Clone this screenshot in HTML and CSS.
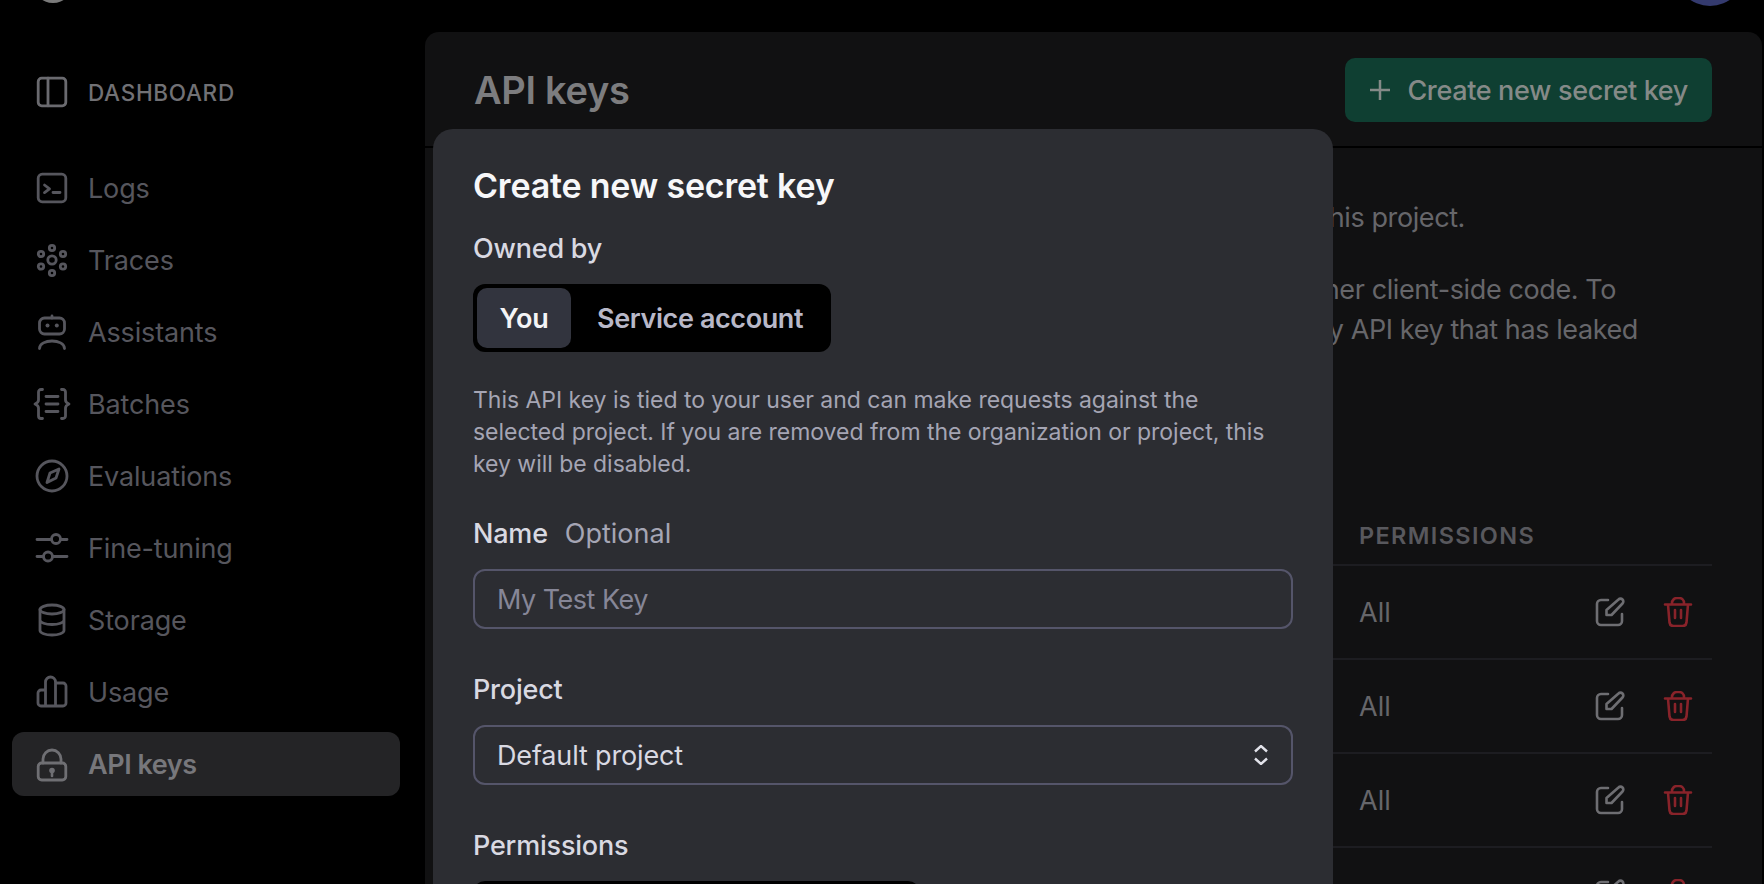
FILE: index.html
```html
<!DOCTYPE html>
<html lang="en">
<head>
<meta charset="utf-8">
<title>API keys</title>
<link rel="stylesheet" href="styles.css">
</head>
<body>
<div class="page">
  <aside class="sidebar">
    <div class="topmark"><span class="org-dot"></span></div>
    <div class="dash">
      <svg class="ico" viewBox="0 0 30 30"><rect x="1.2" y="1.2" width="27.6" height="27.6" rx="3.5"/><path d="M11 1.2V28.8"/></svg>
      <span>DASHBOARD</span>
    </div>
    <nav class="nav">
      <a class="item"><svg class="ico" viewBox="0 0 30 30"><rect x="1.2" y="1.2" width="27.6" height="27.6" rx="4"/><path d="M7.5 12l5 3.8-5 3.8M16 19.5h7"/></svg>Logs</a>
      <a class="item"><svg class="ico" viewBox="0 0 30 30"><circle cx="15" cy="15" r="4.2"/><circle cx="15" cy="3" r="2.7"/><circle cx="15" cy="28" r="2.7"/><circle cx="4" cy="9" r="2.7"/><circle cx="26" cy="9" r="2.7"/><circle cx="4" cy="21.5" r="2.7"/><circle cx="26" cy="21.5" r="2.7"/></svg>Traces</a>
      <a class="item"><svg class="ico" viewBox="0 0 30 30"><rect x="2.5" y="1" width="25" height="16" rx="5"/><path d="M15 1V-1M2.5 31.5c0-10 25-10 25 0"/><circle class="fill" cx="10.5" cy="8.5" r="2"/><circle class="fill" cx="19.8" cy="8.5" r="2"/></svg>Assistants</a>
      <a class="item"><svg class="ico" viewBox="0 0 30 30"><path d="M5.5.5H4a2.5 2.5 0 0 0-2.500 2.500v8c0 2-1 3-3.500 4 2.500 1 3.500 2 3.500 4v8a2.500 2.500 0 0 0 2.500 2.500h1.500M24.500.5H26a2.500 2.500 0 0 1 2.500 2.500v8c0 2 1 3 3.500 4-2.500 1-3.500 2-3.500 4v8a2.500 2.500 0 0 1-2.500 2.500h-1.500M9 7.500h12M9 15h12M9 22.500h12"/></svg>Batches</a>
      <a class="item"><svg class="ico" viewBox="0 0 30 30"><circle cx="15" cy="15" r="15"/><path d="M22 8l-3 9-9 4.500 3-9.500z"/></svg>Evaluations</a>
      <a class="item"><svg class="ico" viewBox="0 0 30 30"><path d="M0 6.500h14.500M24 6.500h6M0 23.500h6M15.500 23.500H30"/><circle cx="19" cy="6" r="4.500"/><circle cx="11" cy="23.500" r="4.500"/></svg>Fine-tuning</a>
      <a class="item"><svg class="ico" viewBox="0 0 30 30"><ellipse cx="15" cy="4.500" rx="12" ry="4.500"/><path d="M3 4.500v21c0 2.500 5.500 4.500 12 4.500s12-2 12-4.500v-21M3 15c0 2.500 5.500 4.500 12 4.500S27 17.500 27 15"/></svg>Storage</a>
      <a class="item"><svg class="ico" viewBox="0 0 30 30"><path d="M8.500 13H4a3 3 0 0 0-3 3v10a3 3 0 0 0 3 3h22a3 3 0 0 0 3-3V9a3 3 0 0 0-3-3h-7.500M8.500 29V5a5 5 0 0 1 10 0V29"/></svg>Usage</a>
      <a class="item active"><svg class="ico" viewBox="0 0 30 30"><rect x="1.200" y="14" width="27.600" height="17" rx="3.500"/><path d="M6 14v-4a9 9 0 0 1 18 0v4"/><circle class="fill" cx="15" cy="21.500" r="2.800"/><path class="thin" d="M15 22v5"/></svg>API keys</a>
    </nav>
  </aside>

  <div class="right">
    <div class="topbar"><span class="avatar"></span></div>
    <main class="panel">
      <header class="panel-head">
        <h1>API keys</h1>
        <button class="create"><svg class="plus" viewBox="0 0 22 22"><path d="M11 1V21M1 11H21"/></svg>Create new secret key</button>
      </header>
      <section class="intro">
        <p class="line-a">this project.</p>
        <p class="line-b">other client-side code. To</p>
        <p class="line-c">any API key that has leaked</p>
      </section>
      <section class="table">
        <div class="thead">PERMISSIONS</div>
        <div class="row"><span>All</span><span class="acts"><svg class="edit" viewBox="0 0 30 30"><path d="M13 3H6a4 4 0 0 0-4 4v17a4 4 0 0 0 4 4h17a4 4 0 0 0 4-4v-7"/><path d="M23.500 2.500a2.700 2.700 0 0 1 4 4L16.500 18H11.500v-5z"/></svg><svg class="trash" viewBox="0 0 30 30"><path d="M2 7.500h26M9 7.500V6a5 5 0 0 1 5-5h2a5 5 0 0 1 5 5v1.500M5 7.500l1.500 18a4 4 0 0 0 4 3.500h9a4 4 0 0 0 4-3.500L25 7.500M12 13v8M18 13v8"/></svg></span></div>
        <div class="row"><span>All</span><span class="acts"><svg class="edit" viewBox="0 0 30 30"><path d="M13 3H6a4 4 0 0 0-4 4v17a4 4 0 0 0 4 4h17a4 4 0 0 0 4-4v-7"/><path d="M23.500 2.500a2.700 2.700 0 0 1 4 4L16.500 18H11.500v-5z"/></svg><svg class="trash" viewBox="0 0 30 30"><path d="M2 7.500h26M9 7.500V6a5 5 0 0 1 5-5h2a5 5 0 0 1 5 5v1.500M5 7.500l1.500 18a4 4 0 0 0 4 3.500h9a4 4 0 0 0 4-3.500L25 7.500M12 13v8M18 13v8"/></svg></span></div>
        <div class="row"><span>All</span><span class="acts"><svg class="edit" viewBox="0 0 30 30"><path d="M13 3H6a4 4 0 0 0-4 4v17a4 4 0 0 0 4 4h17a4 4 0 0 0 4-4v-7"/><path d="M23.500 2.500a2.700 2.700 0 0 1 4 4L16.500 18H11.500v-5z"/></svg><svg class="trash" viewBox="0 0 30 30"><path d="M2 7.500h26M9 7.500V6a5 5 0 0 1 5-5h2a5 5 0 0 1 5 5v1.500M5 7.500l1.500 18a4 4 0 0 0 4 3.500h9a4 4 0 0 0 4-3.500L25 7.500M12 13v8M18 13v8"/></svg></span></div>
        <div class="row"><span></span><span class="acts"><svg class="edit" viewBox="0 0 30 30"><path d="M13 3H6a4 4 0 0 0-4 4v17a4 4 0 0 0 4 4h17a4 4 0 0 0 4-4v-7"/><path d="M23.500 2.500a2.700 2.700 0 0 1 4 4L16.500 18H11.500v-5z"/></svg><svg class="trash" viewBox="0 0 30 30"><path d="M2 7.500h26M9 7.500V6a5 5 0 0 1 5-5h2a5 5 0 0 1 5 5v1.500M5 7.500l1.500 18a4 4 0 0 0 4 3.500h9a4 4 0 0 0 4-3.500L25 7.500M12 13v8M18 13v8"/></svg></span></div>
      </section>
    </main>
  </div>

  <div class="modal" role="dialog">
    <h2>Create new secret key</h2>
    <div class="label owned">Owned by</div>
    <div class="seg">
      <span class="seg-on">You</span>
      <span class="seg-off">Service account</span>
    </div>
    <p class="help">This API key is tied to your user and can make requests against the<br>selected project. If you are removed from the organization or project, this<br>key will be disabled.</p>
    <div class="label name">Name <span class="opt">Optional</span></div>
    <div class="field ph">My Test Key</div>
    <div class="label proj">Project</div>
    <div class="field val">Default project
      <svg class="chev" viewBox="0 0 14 20"><path d="M1 6.500L7 1l6 5.500M1 13.500L7 19l6-5.500"/></svg>
    </div>
    <div class="label perm">Permissions</div>
    <div class="seg seg-perm"></div>
  </div>
</div>
</body>
</html>
```

FILE: styles.css
```css
* { box-sizing: border-box; }
html, body { margin: 0; padding: 0; background: #000; }
body { font-family: Inter, "Liberation Sans", sans-serif; }
.page { position: relative; display: flex; width: 1764px; height: 884px; overflow: hidden; background: #000; }

.sidebar { width: 425px; flex: none; padding-right: 25px; }
.topmark { display: flex; height: 32px; padding-left: 33px; }
.org-dot { display: block; flex: none; width: 40px; height: 40px; margin-top: -37px; border-radius: 50%; background: #7a7a7a; }
.dash { display: flex; align-items: center; height: 60px; margin-top: 30px; padding-left: 37px; gap: 21px; font-size: 22.500px; font-weight: 500; letter-spacing: 0.700px; color: #717175; }
.ico { width: 30px; height: 30px; flex: none; overflow: visible; fill: none; stroke: #56565d; stroke-width: 2.800; stroke-linecap: round; stroke-linejoin: round; }
.ico .fill { fill: #56565d; stroke: none; }
.dash .ico { stroke: #6a6a6f; }
.nav { display: flex; flex-direction: column; gap: 8px; margin: 34px 0 0 12px; }
.item { display: flex; align-items: center; height: 64px; padding-left: 25px; gap: 21px; border-radius: 12px; font-size: 27px; letter-spacing: -0.150px; color: #56565d; }
.item.active { background: #242426; color: #77777b; font-weight: 600; letter-spacing: -0.450px; }
.item.active .ico { stroke: #6f6f73; }
.item.active .ico .fill { fill: #6f6f73; stroke: none; }
.item.active .ico .thin { stroke-width: 2.600; }

.right { flex: 1; display: flex; flex-direction: column; padding-right: 2px; min-width: 0; }
.topbar { height: 32px; flex: none; padding-left: 1247px; }
.avatar { display: block; width: 70px; height: 70px; margin-top: -64px; margin-left: 3px; border-radius: 50%; background: #343a6e; }

.panel { flex: 1; background: #111112; border-radius: 14px 14px 0 0; }
.panel-head { display: flex; align-items: center; justify-content: space-between; height: 116px; padding: 2px 50px 0 49px; border-bottom: 2px solid #000; }
h1 { margin: 0; font-size: 38px; font-weight: 600; letter-spacing: -0.300px; color: #7d7d7f; }
.create { display: flex; align-items: center; gap: 16px; height: 64px; padding: 0 24px; border: 0; border-radius: 10px; background: #0f3f32; font: 500 27px Inter, sans-serif; letter-spacing: -0.350px; color: #858a88; }
.plus { width: 22px; height: 22px; fill: none; stroke: #858a88; stroke-width: 2.500; }

.intro { height: 360px; }
.intro p { margin: 0; font-size: 27px; line-height: 40px; letter-spacing: -0.400px; color: #66666a; text-align: right; white-space: nowrap; }
.line-a { padding: 50px 297px 0 0; }
.line-b { padding: 32px 146px 0 0; letter-spacing: -0.650px; }
.line-c { padding-right: 124px; }

.table { margin: 0 50px 0 49px; }
.row { display: flex; align-items: center; justify-content: space-between; height: 94px; padding: 0 19px 0 885px; border-bottom: 2px solid #1d1d21; font-size: 27px; color: #66666a; }
.thead { display: flex; align-items: center; height: 59px; margin-top: -1px; padding-left: 885px; border-bottom: 2px solid #1d1d21; font-size: 23.500px; font-weight: 600; letter-spacing: 1.350px; color: #58585d; }
.acts { display: flex; gap: 38px; align-items: center; }
.edit, .trash { width: 30px; height: 30px; fill: none; stroke-width: 2.600; stroke-linecap: round; stroke-linejoin: round; }
.edit { stroke: #6e6e72; }
.trash { stroke: #89232a; }

.modal { position: absolute; left: 433px; top: 129px; width: 900px; height: 800px; padding: 0 40px; background: #2c2d32; border-radius: 20px; }
h2 { margin: 0; padding-top: 34px; font-size: 34px; line-height: 46px; font-weight: 600; letter-spacing: -0.200px; color: #f7f7f9; }
.label { font-size: 27px; font-weight: 500; line-height: 36px; letter-spacing: -0.200px; color: #d9d9e2; }
.owned { margin-top: 22px; }
.seg { display: flex; width: 358px; height: 68px; margin-top: 17px; padding: 4px; background: #000; border-radius: 12px; }
.seg-on { display: flex; align-items: center; justify-content: center; width: 94px; border-radius: 10px; background: #32343e; font-size: 27px; font-weight: 600; letter-spacing: -0.200px; color: #f4f4f6; }
.seg-off { display: flex; align-items: center; padding-left: 26px; font-size: 27px; font-weight: 600; letter-spacing: -0.400px; color: #b8b8c8; }
.help { margin: 32px 0 0; font-size: 23px; line-height: 32px; letter-spacing: -0.030px; color: #a5a5b4; white-space: nowrap; }
.name { margin-top: 36px; }
.opt { margin-left: 10px; font-weight: 400; letter-spacing: 0; color: #a5a5b4; }
.field { display: flex; align-items: center; justify-content: space-between; height: 60px; margin-top: 17px; padding: 0 22px 0 22px; border: 2px solid #55556a; border-radius: 12px; font-size: 27px; }
.ph { color: #868697; letter-spacing: -0.500px; }
.val { color: #d9d9e2; letter-spacing: -0.150px; }
.chev { width: 14px; height: 20px; margin-right: 1px; fill: none; stroke: #e2e2ea; stroke-width: 2.400; }
.proj { margin-top: 43px; }
.perm { margin-top: 43px; }
.seg-perm { width: 447px; margin-top: 17px; height: 80px; }
```
